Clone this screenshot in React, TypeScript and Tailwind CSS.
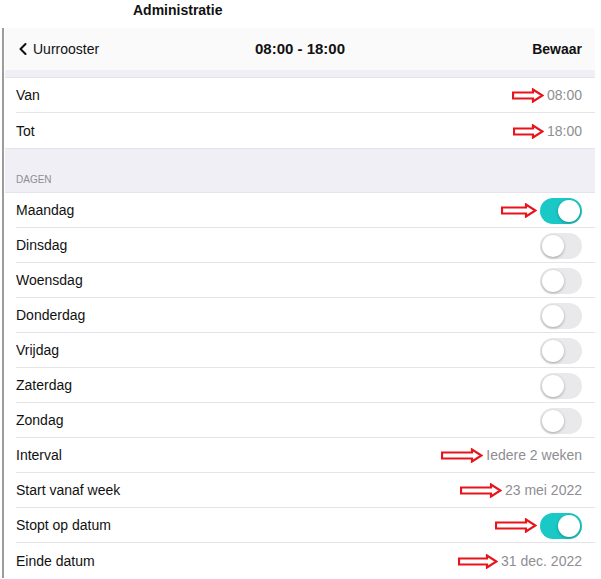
import React from 'react';
import { ChevronLeft } from 'lucide-react';

const Arrow = ({ w = 32 }: { w?: number }) => (
  <svg width={w} height={15} viewBox={`0 0 ${w} 15`} className="shrink-0">
    <polygon
      points={`1,4.5 ${w - 11},4.5 ${w - 11},1.5 ${w - 1.5},7.5 ${w - 11},13.5 ${w - 11},10.5 1,10.5`}
      fill="white"
      stroke="#e8141c"
      strokeWidth={2.2}
      strokeLinejoin="miter"
    />
  </svg>
);

const Toggle = ({ on }: { on: boolean }) => (
  <div
    className={`relative h-[26px] w-[42px] shrink-0 rounded-full ${on ? 'bg-[#1ac8c6]' : 'bg-[#e9e9eb]'}`}
  >
    <div
      className={`absolute top-[2px] h-[22px] w-[22px] rounded-full bg-white shadow-[0_1px_3px_rgba(0,0,0,0.3)] ${on ? 'right-[2px]' : 'left-[2px]'}`}
    />
  </div>
);

type RowProps = { label: string; value?: string; toggle?: boolean; arrow?: number; last?: boolean };

const Row = ({ label, value, toggle, arrow, last }: RowProps) => (
  <div className="flex h-[35px] bg-white pl-[11px]">
    <div className={`flex flex-1 items-center pt-px pr-[13px] ${last ? '' : 'border-b border-[#e4e4e8]'}`}>
      <span className="text-[14px] text-[#111]">{label}</span>
      <div className="ml-auto flex items-center gap-[3px]">
        {arrow ? <Arrow w={arrow} /> : null}
        {value !== undefined && <span className="text-[14px] text-[#8e8e93]">{value}</span>}
        {toggle !== undefined && <Toggle on={toggle} />}
      </div>
    </div>
  </div>
);

export default function App() {
  const days: [string, boolean][] = [
    ['Maandag', true],
    ['Dinsdag', false],
    ['Woensdag', false],
    ['Donderdag', false],
    ['Vrijdag', false],
    ['Zaterdag', false],
    ['Zondag', false],
  ];

  return (
    <div className="h-[579px] w-[601px] overflow-hidden bg-white font-['Liberation_Sans',Arial,sans-serif]">
      <div className="flex h-[28px] items-start pt-[3px] pl-[133px]">
        <span className="text-[14px] leading-[14px] font-bold text-[#111]">Administratie</span>
      </div>
      <div className="flex">
        <div className="ml-[2px] w-[2px] bg-[#9c9c9c]" />
        <div className="w-[591px] pl-px">
          <div className="relative flex h-[42px] items-center bg-[#fafafa] px-[10px]">
            <div className="flex items-center">
              <ChevronLeft size={20} strokeWidth={2.5} className="-ml-[2px] text-[#111]" />
              <span className="text-[14px] text-[#111]">Uurrooster</span>
            </div>
            <span className="absolute left-1/2 -translate-x-1/2 text-[15px] font-bold text-[#111]">
              08:00 - 18:00
            </span>
            <span className="ml-auto pr-[3px] text-[14px] font-bold text-[#111]">Bewaar</span>
          </div>
          <div className="h-[8px] border-b border-[#e4e4e8] bg-[#f0eff5]" />
          <Row label="Van" value="08:00" arrow={32} />
          <Row label="Tot" value="18:00" arrow={31} last />
          <div className="flex h-[45px] items-end border-y border-[#e4e4e8] bg-[#f0eff5] pb-[5px] pl-[11px]">
            <span className="text-[10px] text-[#8e8e93]">DAGEN</span>
          </div>
          {days.map(([d, on]) => (
            <Row key={d} label={d} toggle={on} arrow={on ? 36 : undefined} />
          ))}
          <Row label="Interval" value="Iedere 2 weken" arrow={42} />
          <Row label="Start vanaf week" value="23 mei 2022" arrow={42} />
          <Row label="Stopt op datum" toggle arrow={42} />
          <Row label="Einde datum" value="31 dec. 2022" arrow={40} last />
        </div>
      </div>
    </div>
  );
}
